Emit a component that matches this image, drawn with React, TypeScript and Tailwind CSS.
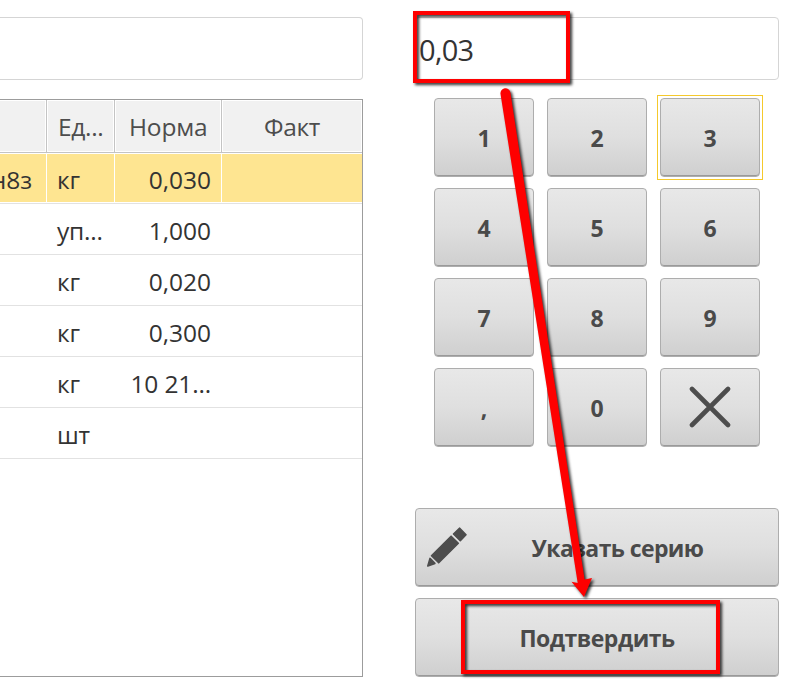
import React from "react";

type Row = { name?: string; unit: string; norm: string; selected?: boolean };

const rows: Row[] = [
  { name: "н8з", unit: "кг", norm: "0,030", selected: true },
  { unit: "уп...", norm: "1,000" },
  { unit: "кг", norm: "0,020" },
  { unit: "кг", norm: "0,300" },
  { unit: "кг", norm: "10 21..." },
  { unit: "шт", norm: "" },
];

const keys = ["1", "2", "3", "4", "5", "6", "7", "8", "9", ",", "0"];

const surface =
  "rounded-[4px] border border-[#adadad] shadow-[inset_0_-1px_0_#9a9a9a] bg-linear-to-b from-[#e8e8e8] via-[#dfdfdf] to-[#cfcfcf] font-bold text-[#4a4a4a]";

function Key({ label, focused }: { label: string; focused?: boolean }) {
  return (
    <div className="relative h-[79px] w-[100px]">
      <button className={`${surface} flex h-full w-full items-center justify-center pt-[2px] text-[23px]`}>
        {label}
      </button>
      {focused && <span className="pointer-events-none absolute -inset-[3px] border border-[#f5c92c]" />}
    </div>
  );
}

function Table() {
  return (
    <div className="flex h-[578px] w-[363px] flex-col border-t border-r border-b border-[#9c9c9c] text-[24.5px] leading-none text-[#333]">
      <div className="grid h-[53px] grid-cols-[47px_68px_107px_140px] border-b border-[#c4c4c4] text-[#4d4d4d]">
        <div className="border-r border-[#c4c4c4] p-px pl-0">
          <div className="h-full bg-[#f1f1f1]" />
        </div>
        <div className="border-r border-[#c4c4c4] p-px">
          <div className="flex h-full items-center bg-[#f1f1f1] pt-[2px] pl-[10px]">
            <span className="tracking-[-0.3px]">Ед...</span>
          </div>
        </div>
        <div className="border-r border-[#c4c4c4] p-px">
          <div className="flex h-full items-center bg-[#f1f1f1] pt-[2px] pl-[13px]">
            <span className="tracking-[-0.2px]">Норма</span>
          </div>
        </div>
        <div className="p-px">
          <div className="flex h-full items-center justify-center bg-[#f1f1f1] pt-[2px]">
            <span className="tracking-[-0.3px]">Факт</span>
          </div>
        </div>
      </div>
      {rows.map((row, i) => (
        <div
          key={i}
          className={`grid h-[51px] grid-cols-[46px_68px_107px_141px] border-b border-[#e2e2e2] py-px [&>div:not(:first-child)]:border-l [&>div:not(:first-child)]:border-white ${
            row.selected ? "[&>div]:bg-[#fee591]" : ""
          }`}
        >
          <div className="flex items-center justify-end overflow-hidden pt-[5px] pr-[14px] whitespace-nowrap">
            {row.name}
          </div>
          <div className="flex items-center pt-[5px] pl-[10px] tracking-[-0.2px] whitespace-nowrap">{row.unit}</div>
          <div
            className={`flex items-center justify-end pt-[5px] pr-[10px] whitespace-nowrap ${
              row.norm.endsWith("...") ? "tracking-[-0.15px]" : ""
            }`}
          >
            {row.norm}
          </div>
          <div />
        </div>
      ))}
    </div>
  );
}

function Annotations() {
  return (
    <svg
      className="pointer-events-none absolute top-0 left-0 h-[684px] w-[788px] drop-shadow-[2px_2px_1.5px_rgba(0,0,0,0.8)]"
      viewBox="0 0 788 684"
    >
      <rect x="415" y="13" width="153" height="68" fill="none" stroke="#fe0000" strokeWidth="4" />
      <rect x="463" y="602" width="255" height="70" fill="none" stroke="#fe0000" strokeWidth="4" />
      <path
        d="M500.5 94 A5 5 0 0 1 510.4 92.5 L584.6 579.5 L592 578 L584 597 L571.5 581.7 L577.7 583 Z"
        fill="#fe0000"
      />
    </svg>
  );
}

export default function App() {
  return (
    <div className="relative flex h-[684px] w-[788px] justify-between overflow-hidden bg-white pt-[17px] pr-[9px] font-['Open_Sans','Noto_Sans',sans-serif]">
      <section className="flex flex-col gap-[19px]">
        <div className="h-[63px] w-[363px] rounded-r-[4px] border-y border-r border-[#d5d5d5]" />
        <Table />
      </section>

      <section className="flex w-[364px] flex-col">
        <div className="flex h-[63px] items-center rounded-[4px] border border-[#d5d5d5] pt-[3px] pl-[3px] text-[29px] tracking-[-0.7px] text-[#333]">
          0,03
        </div>
        <div className="mt-[18px] ml-[19px] grid w-max grid-cols-3 gap-x-[13px] gap-y-[11px]">
          {keys.map((k) => (
            <Key key={k} label={k} focused={k === "3"} />
          ))}
          <button className={`${surface} flex h-[79px] w-[100px] items-center justify-center pb-[2px]`}>
            <svg className="h-[42px] w-[42px]" viewBox="0 0 42 42">
              <path d="M3 3 L39 39 M39 3 L3 39" stroke="#4d4d4d" strokeWidth="4.6" strokeLinecap="round" />
            </svg>
          </button>
        </div>
        <div className="mt-[61px] flex flex-col gap-[11px]">
          <button className={`${surface} flex h-[79px] items-center pt-px pl-[10px] text-[23px]`}>
            <svg
              className="h-[42px] w-[42px] shrink-0"
              viewBox="0 0 42 42"
              fill="#4d4d4d"
              stroke="#4d4d4d"
              strokeWidth="1.6"
              strokeLinejoin="round"
            >
              <path d="M33.7 1.2 L40 7.7 L34.3 13.6 L27.5 7 Z" />
              <path d="M25.1 9.2 L32.3 16.2 L12.7 35.8 L5.5 28.7 Z" />
              <path d="M4 31.4 L8.9 36.4 L1.8 39 Z" />
            </svg>
            <span className="flex-1 pr-[11px] text-center tracking-[-0.6px] whitespace-nowrap">Указать серию</span>
          </button>
          <button
            className={`${surface} flex h-[79px] items-center justify-center pt-px text-[23px] tracking-[-0.5px]`}
          >
            Подтвердить
          </button>
        </div>
      </section>
      <Annotations />
    </div>
  );
}
